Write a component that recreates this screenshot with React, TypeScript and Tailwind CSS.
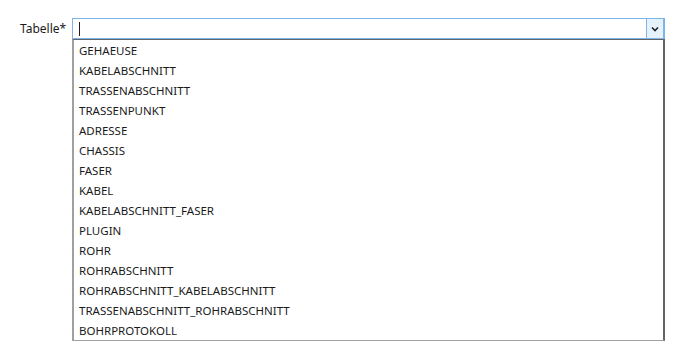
const items = [
  "GEHAEUSE",
  "KABELABSCHNITT",
  "TRASSENABSCHNITT",
  "TRASSENPUNKT",
  "ADRESSE",
  "CHASSIS",
  "FASER",
  "KABEL",
  "KABELABSCHNITT_FASER",
  "PLUGIN",
  "ROHR",
  "ROHRABSCHNITT",
  "ROHRABSCHNITT_KABELABSCHNITT",
  "TRASSENABSCHNITT_ROHRABSCHNITT",
  "BOHRPROTOKOLL",
];

export default function App() {
  return (
    <div
      className="w-[681px] h-[354px] bg-white text-[11.5px] text-[#1a1a1a] pt-[18px] pl-5 flex items-start"
      style={{ fontFamily: '"Noto Sans", "Liberation Sans", sans-serif' }}
    >
      <label className="w-[52px] h-[21px] pt-px leading-[20px] text-[12px]">Tabelle*</label>
      <div className="w-[593px] flex flex-col">
        {/* Combo input */}
        <div className="h-[21px] border border-[#7eb4ea] flex">
          <div className="flex-1 flex items-center pl-[6px]">
            <span className="w-px h-[14px] bg-[#1e1e1e]" />
          </div>
          <div className="w-[18px] bg-[#e5f1fb] border-l border-r border-[#7eb4ea] flex items-center justify-center">
            <svg width="8" height="6" viewBox="0 0 8 6" fill="none" stroke="#222" strokeWidth="1.6">
              <polyline points="1,1.5 4,4.5 7,1.5" />
            </svg>
          </div>
        </div>
        {/* Dropdown list */}
        <div className="border-t border-t-[#646464] border-l-2 border-l-[#a0a0a0] border-r-2 border-r-[#646464] border-b border-b-[#a0a0a0]">
          {items.map((it) => (
            <div key={it} className="h-5 pt-[2px] leading-[18px] pl-[5px] whitespace-nowrap">
              {it}
            </div>
          ))}
        </div>
      </div>
    </div>
  );
}
